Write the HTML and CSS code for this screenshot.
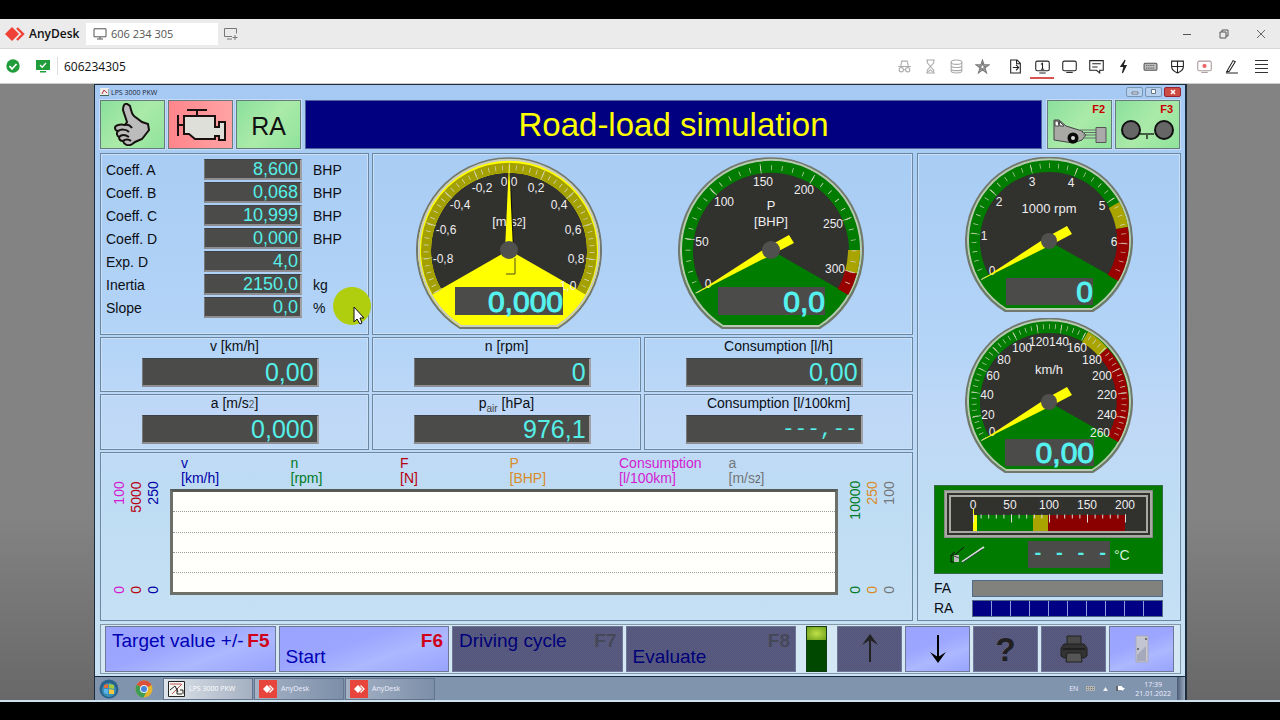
FILE: index.html
```html
<!DOCTYPE html>
<html lang="en">
<head>
<meta charset="utf-8">
<title>AnyDesk - 606 234 305</title>
<link rel="stylesheet" href="styles.css">
</head>
<body>
<header class="tabs">
  <svg class="brand-mark" width="20" height="14" viewBox="0 0 20 14" aria-hidden="true"><path d="M7 0l7 7-7 7-7-7z" fill="#ef4136"/><path d="M12 1l6 6-6 6" fill="none" stroke="#ef4136" stroke-width="2.4"/></svg>
  <span class="brand">AnyDesk</span>
  <button class="tab"><svg width="14" height="12" viewBox="0 0 14 12" fill="none" stroke="#555"><path d="M1 .8h12v8H1zM4 11h6M7 9v2"/></svg>606 234 305</button>
  <button class="plain" aria-label="New session"><svg width="15" height="13" viewBox="0 0 15 13" fill="none" stroke="#777"><path d="M9 9.500H1.500v-8h12v5M4 12h5M12 8v5M9.500 10.500h5"/></svg></button>
  <div class="window-buttons">
    <button class="plain" aria-label="Minimize"><svg width="12" height="12" viewBox="0 0 12 12" stroke="#555"><path d="M2 6.500h8"/></svg></button>
    <button class="plain" aria-label="Restore"><svg width="12" height="12" viewBox="0 0 12 12" stroke="#555" fill="none"><path d="M2 4h6v6H2zM4 4V2h6v6H8"/></svg></button>
    <button class="plain" aria-label="Close"><svg width="12" height="12" viewBox="0 0 12 12" stroke="#666"><path d="M2 2l8 8M10 2l-8 8"/></svg></button>
  </div>
</header>
<nav class="toolbar">
  <svg width="14" height="14" viewBox="0 0 14 14" fill="none" aria-hidden="true"><circle cx="7" cy="7" r="6.700" fill="#209c3a"/><path d="M3.500 7l2.500 3 4.500-5" stroke="#fff" stroke-width="1.800"/></svg>
  <svg class="secure" width="14" height="13" viewBox="0 0 14 13" fill="none" aria-hidden="true"><path d="M0 0h14v10H0zM4 11h6v1.500H4z" fill="#209c3a"/><path d="M4 5l2.200 2.300L10 3" stroke="#fff" stroke-width="1.300"/></svg>
  <input class="address" aria-label="Remote address" value="606234305">
  <div class="tools faint">
    <button class="plain" aria-label="Privacy"><svg width="15" height="15" viewBox="0 0 14 14"><path d="M1 7h12M3.500 6.500L4.500 2h5l1 4.500M6 10h2"/><circle cx="4" cy="10" r="2"/><circle cx="10" cy="10" r="2"/></svg></button>
    <button class="plain" aria-label="Wait"><svg width="15" height="15" viewBox="0 0 14 14"><path d="M3 1h8M3 13h8M4 1v2.500L7 7l3-3.500V1M4 13v-2.500L7 7l3 3.500V13M5 12l2-2 2 2"/></svg></button>
    <button class="plain" aria-label="Storage"><svg width="15" height="15" viewBox="0 0 14 14"><ellipse cx="7" cy="3" rx="5" ry="2"/><path d="M2 3v8c0 2.700 10 2.700 10 0V3M2 6c0 2.500 10 2.500 10 0M2 9c0 2.500 10 2.500 10 0"/></svg></button>
    <button class="plain star" aria-label="Favorite"><svg width="15" height="15" viewBox="0 0 14 14"><path d="M7 1l1.500 4.500H13L9.400 8.200 10.800 13 7 10l-3.800 3 1.400-4.800L1 5.500h4.500z"/><path d="M7 4l.9 2.500h2L8.300 8l.6 2L7 9 5.100 10l.6-2-1.600-1.500h2z"/></svg></button>
  </div>
  <div class="tools">
    <button class="plain" aria-label="Transfer"><svg width="15" height="15" viewBox="0 0 14 14"><path d="M8.500 1H2.500v12h9V4zM8 1v3.500h3.500M4.500 8h5M7.500 5.500L10 8l-2.500 2.500"/></svg></button>
    <button class="plain active" aria-label="Monitor"><svg width="15" height="15" viewBox="0 0 14 14"><rect x=".7" y="2" width="12.600" height="9" rx="1.500"/><path d="M4 13h6M5.500 5L7 4v5.500M5.500 9.500h3"/></svg></button>
    <button class="plain" aria-label="Display"><svg width="15" height="15" viewBox="0 0 14 14"><rect x=".7" y="2" width="12.600" height="9" rx="1.500"/><path d="M4 12.500h6"/></svg></button>
    <button class="plain" aria-label="Chat"><svg width="15" height="15" viewBox="0 0 14 14"><path d="M.7 1.500h12.600v9H10V13L7 10.500H.7zM3 4.500h8M3 7.500h5"/></svg></button>
    <button class="plain" aria-label="Actions"><svg width="15" height="15" viewBox="0 0 14 14"><path d="M8.500 1L4.500 7h3l-1.500 6 3.500-7h-3z" fill="#222"/></svg></button>
    <button class="plain" aria-label="Keyboard"><svg width="15" height="15" viewBox="0 0 14 14"><rect x="1" y="4" width="12" height="6.500" rx="1" fill="#bbb" stroke="#555"/><path d="M3 6h8M3 8.500h8" stroke="#555" stroke-dasharray="1 1"/></svg></button>
    <button class="plain" aria-label="Permissions"><svg width="15" height="15" viewBox="0 0 14 14"><path d="M1.500 2h11v5c0 3-3 5-5.500 6C4.500 12 1.500 10 1.500 7zM7 2v11M1.500 7h11"/></svg></button>
    <button class="plain" aria-label="Record"><svg width="15" height="15" viewBox="0 0 14 14"><rect x=".7" y="2" width="12.600" height="9" rx="1.500" stroke="#a99"/><path d="M4 12.500h6" stroke="#a99"/><circle cx="7" cy="6.500" r="1.500" fill="#e55" stroke="#e77"/></svg></button>
    <button class="plain" aria-label="Draw"><svg width="15" height="15" viewBox="0 0 14 14"><path d="M2.500 12L8.500 1.500l2 1-5.500 9zM2 13h11"/></svg></button>
  </div>
  <button class="plain menu" aria-label="Menu"><svg width="14" height="15" viewBox="0 0 14 15" stroke="#333"><path d="M0 1.500h13M0 5.500h13M0 9.500h13M0 13.500h13"/></svg></button>
</nav>

<main class="stage">
 <div class="desktop">
  <section class="app">
    <div class="caption">
      <svg width="9" height="8" viewBox="0 0 9 8" aria-hidden="true"><path d="M0 0h9v8H0z" fill="#eee"/><path d="M0 7.500h9V1" stroke="#465" fill="none"/><path d="M2 6l2-4 3 3" stroke="#b33" fill="none"/></svg>
      <span>LPS 3000 PKW</span>
      <button class="cap-btn first" aria-label="Minimize window"><svg width="8" height="6"><path d="M1 3h6v2H1z" fill="#fff" stroke="#678"/></svg></button>
      <button class="cap-btn" aria-label="Restore window"><svg width="8" height="6"><path d="M1.500 .5h4v4h-4z" fill="#fff" stroke="#678"/></svg></button>
      <button class="cap-btn close" aria-label="Close window"><svg width="8" height="6"><path d="M2 1l4 4M6 1L2 5" stroke="#fff" stroke-width="1.500"/></svg></button>
    </div>

    <div class="head">
      <button class="tile green" aria-label="Status OK"><svg width="37" height="43" viewBox="0 0 37 43"><path d="M13 1c-3-1-4 3-4 6l4 12-2 3C6 21 1 22 1 25c0 2 2 3 3 3-2 2-1 5 1 6 0 3 2 4 4 4 1 3 4 5 7 4 2 0 3-2 5-3l7-3 7-9-1-6-6-2-8-6C17 10 17 6 16 3z" fill="#bcbcbc" stroke="#16120f" stroke-width="2"/><path d="M4 28c3-2 8-2 11 1M5 34c3-3 7-2 10 0M9 38c2-2 6-2 8 0M11 22c3-1 5 0 7 3" fill="none" stroke="#16120f" stroke-width="2"/></svg></button>
      <button class="tile red" aria-label="Engine"><svg width="50" height="34" viewBox="0 0 50 34" stroke="#1a1010" stroke-width="2"><path d="M11 2h20M21 2v6M2 7v21M2 17h6" fill="none"/><path d="M8 8h31v11h4v-5h6v18h-6v-4h-4v3H19l-6-5H8z" fill="#dfdfd9"/></svg></button>
      <button class="tile green axle">RA</button>
      <h1>Road-load simulation</h1>
      <button class="tile green keyed" aria-label="F2 Car"><b>F2</b><svg width="54" height="26" viewBox="0 0 54 26"><path d="M1 2h5l7 6 16 5 4 4-4 5-9 3-19-3z" fill="#a9aaa6" stroke="#444"/><path d="M2 3h3l1 5H2zM6 3l5 5H7z" fill="#fff" stroke="#444"/><path d="M27 12h17M29 14.500h15M30 17h14M30 20h14" stroke="#66706a"/><path d="M43 9.500h10v15H43z" fill="#aaa" stroke="#555"/><circle cx="20" cy="20" r="5.500" fill="#080808"/><circle cx="20" cy="20" r="2" fill="#ddd"/></svg></button>
      <button class="tile green keyed" aria-label="F3 Axle"><b>F3</b><svg width="54" height="24" viewBox="0 0 54 24"><path d="M19 16h14M26 16v5" stroke="#435e43" stroke-width="2"/><circle cx="10" cy="12" r="9" fill="#666" stroke="#111" stroke-width="2"/><circle cx="43" cy="12" r="9" fill="#666" stroke="#111" stroke-width="2"/></svg></button>
    </div>

    <div class="panels">
      <div class="left">
        <section class="panel coeffs">
          <label for="ca">Coeff. A</label><output id="ca" class="lcd">8,600</output><span>BHP</span>
          <label for="cb">Coeff. B</label><output id="cb" class="lcd">0,068</output><span>BHP</span>
          <label for="cc">Coeff. C</label><output id="cc" class="lcd">10,999</output><span>BHP</span>
          <label for="cd">Coeff. D</label><output id="cd" class="lcd">0,000</output><span>BHP</span>
          <label for="ed">Exp. D</label><output id="ed" class="lcd">4,0</output><span></span>
          <label for="in">Inertia</label><output id="in" class="lcd">2150,0</output><span>kg</span>
          <label for="sl">Slope</label><output id="sl" class="lcd">0,0</output><span>%</span>
          <div class="pointer"><svg width="38" height="38" viewBox="0 0 38 38"><circle cx="19" cy="19" r="19" fill="#b1ce0e"/><path d="M21 20v15l3-3 3 5 2-1-2-5h4z" fill="#fff" stroke="#111"/></svg></div>
        </section>

        <section class="panel dials">
          <svg class="dial" width="186" height="172" viewBox="-93 -93 186 172">
            <path d="M-49 78A92 92 0 1 1 49 78Z" fill="#ff0" stroke="#73786f" stroke-width="2"/>
            <path d="M-48 76A90 90 0 1 1 48 76Z" fill="none" stroke="#c9cdc0" stroke-width="2"/>
            <path d="M0 0L-68 39A78 78 0 1 1 68 39Z" fill="#31312e"/>
            <path d="M-72 42A83 83 0 1 1 72 42" fill="none" stroke="#a3a000" stroke-width="10"/>
            <path class="ticks" d="M-72 42A83 83 0 1 1 72 42" pathLength="240" stroke-width="5" stroke-dasharray=".5 4.300"/>
            <path class="ticks" d="M-71 41A82 82 0 1 1 71 41" pathLength="240" stroke-width="10" stroke-dasharray=".5 23.500"/>
            <g class="scale"><text x="-66" y="13">-0,8</text><text x="-63" y="-16">-0,6</text><text x="-49" y="-41">-0,4</text><text x="-27" y="-58">-0,2</text><text x="0" y="-64">0,0</text><text x="27" y="-58">0,2</text><text x="50" y="-41">0,4</text><text x="64" y="-16">0,6</text><text x="67" y="13">0,8</text><text x="59" y="40">1,0</text></g>
            <text class="unit" x="0" y="-24">[m/s<tspan class="pow">2</tspan>]</text>
            <path d="M6 8v16h-9" fill="none" stroke="#4c4c20"/>
            <path d="M2 0L2-70 5 0z" fill="#111"/><path d="M0-88L4 0h-8z" fill="#ff0"/><circle r="9" fill="#50504e"/>
            <path d="M-54 37H54v28H-54z" fill="#4b4b49"/><text class="read" x="54" y="62">0,000</text>
          </svg>
          <svg class="dial" width="186" height="172" viewBox="-93 -93 186 172">
            <path d="M-49 78A92 92 0 1 1 49 78Z" fill="#007c00" stroke="#73786f" stroke-width="2"/>
            <path d="M-48 76A90 90 0 1 1 48 76Z" fill="none" stroke="#b9c9b2" stroke-width="2"/>
            <path d="M0 0L-68 39A78 78 0 1 1 68 39Z" fill="#31312e"/>
            <path d="M83 0A83 83 0 0 1 80 22" fill="none" stroke="#a9a400" stroke-width="12"/>
            <path d="M80 22A83 83 0 0 1 72 42" fill="none" stroke="#900" stroke-width="12"/>
            <path class="ticks" d="M-72 42A83 83 0 1 1 72 42" pathLength="240" stroke-width="5" stroke-dasharray=".5 7"/>
            <path class="ticks" d="M-71 41A82 82 0 1 1 71 41" pathLength="240" stroke-width="10" stroke-dasharray=".5 37"/>
            <g class="scale"><text x="-63" y="38">0</text><text x="-69" y="-4">50</text><text x="-47" y="-44">100</text><text x="-8" y="-64">150</text><text x="33" y="-56">200</text><text x="62" y="-22">250</text><text x="64" y="23">300</text></g>
            <text class="unit" x="0" y="-40">P</text><text class="unit" x="0" y="-24">[BHP]</text>
            <path class="needle" d="M-76 44L-2-4 18-15 23-7 2 4z"/><circle r="9" fill="#50504e"/>
            <path d="M-53 37H54v28H-53z" fill="#4b4b49"/><text class="read" x="54" y="62">0,0</text>
          </svg>
        </section>

        <section class="panel meter"><label for="v">v [km/h]</label><output id="v" class="lcd">0,00</output></section>
        <section class="panel meter"><label for="n">n [rpm]</label><output id="n" class="lcd">0</output></section>
        <section class="panel meter"><label for="c1">Consumption [l/h]</label><output id="c1" class="lcd">0,00</output></section>
        <section class="panel meter"><label for="a">a [m/s<small>2</small>]</label><output id="a" class="lcd">0,000</output></section>
        <section class="panel meter"><label for="p">p<sub>air</sub> [hPa]</label><output id="p" class="lcd">976,1</output></section>
        <section class="panel meter"><label for="c2">Consumption [l/100km]</label><output id="c2" class="lcd dashes">---,--</output></section>

        <section class="panel chart">
          <div class="axis start"><p class="magenta"><span>100</span><span>0</span></p><p class="crimson"><span>5000</span><span>0</span></p><p class="blue"><span>250</span><span>0</span></p></div>
          <div class="plot">
            <div class="legend"><span class="blue">v<br>[km/h]</span><span class="green-t">n<br>[rpm]</span><span class="crimson">F<br>[N]</span><span class="orange">P<br>[BHP]</span><span class="magenta">Consumption<br>[l/100km]</span><span class="gray">a<br>[m/s<small>2</small>]</span></div>
            <div class="grid-area"><i></i><i></i><i></i><i></i><i></i></div>
          </div>
          <div class="axis end"><p class="green-t"><span>10000</span><span>0</span></p><p class="orange"><span>250</span><span>0</span></p><p class="gray"><span>100</span><span>0</span></p></div>
        </section>
      </div>

      <section class="panel right">
        <svg class="dial" width="168" height="156" viewBox="-84 -84 168 156">
          <path d="M-44 70A83 83 0 1 1 44 70Z" fill="#007c00" stroke="#73786f" stroke-width="2"/>
          <path d="M-43 68A81 81 0 1 1 43 68Z" fill="none" stroke="#b9c9b2" stroke-width="2"/>
          <path d="M0 0L-60 34A69 69 0 1 1 60 34Z" fill="#31312e"/>
          <path d="M65-36A74 74 0 0 1 73-13" fill="none" stroke="#a9a400" stroke-width="12"/>
          <path d="M73-13A74 74 0 0 1 64 37" fill="none" stroke="#900" stroke-width="12"/>
          <path class="ticks" d="M-65 37A75 75 0 1 1 65 37" pathLength="240" stroke-width="5" stroke-dasharray=".5 6.560"/>
          <path class="ticks" d="M-64 37A74 74 0 1 1 64 37" pathLength="240" stroke-width="9" stroke-dasharray=".5 34.800"/>
          <g class="scale"><text x="-57" y="34">0</text><text x="-65" y="-1">1</text><text x="-50" y="-35">2</text><text x="-17" y="-55">3</text><text x="22" y="-54">4</text><text x="53" y="-31">5</text><text x="65" y="5">6</text></g>
          <text class="unit" x="0" y="-28">1000 rpm</text>
          <path class="needle" d="M-68 39L-2-4 18-15 23-7 2 4z"/><circle r="8" fill="#50504e"/>
          <path d="M-43 37H44v27H-43z" fill="#4b4b49"/><text class="read" x="44" y="61">0</text>
        </svg>
        <svg class="dial" width="168" height="156" viewBox="-84 -84 168 156">
          <path d="M-44 70A83 83 0 1 1 44 70Z" fill="#007c00" stroke="#73786f" stroke-width="2"/>
          <path d="M-43 68A81 81 0 1 1 43 68Z" fill="none" stroke="#b9c9b2" stroke-width="2"/>
          <path d="M0 0L-60 34A69 69 0 1 1 60 34Z" fill="#31312e"/>
          <path d="M36-65A74 74 0 0 1 54-50" fill="none" stroke="#a9a400" stroke-width="12"/>
          <path d="M54-50A74 74 0 0 1 64 37" fill="none" stroke="#900" stroke-width="12"/>
          <path class="ticks" d="M-65 37A75 75 0 1 1 65 37" pathLength="240" stroke-width="5" stroke-dasharray=".5 4.115"/>
          <path class="ticks" d="M-64 37A74 74 0 1 1 64 37" pathLength="240" stroke-width="9" stroke-dasharray=".5 17.960"/>
          <g class="scale"><text x="-57" y="34">0</text><text x="-61" y="17">20</text><text x="-62" y="-3">40</text><text x="-56" y="-22">60</text><text x="-45" y="-38">80</text><text x="-27" y="-50">100</text><text x="-10" y="-56">120</text><text x="10" y="-56">140</text><text x="28" y="-50">160</text><text x="43" y="-38">180</text><text x="53" y="-22">200</text><text x="58" y="-3">220</text><text x="58" y="17">240</text><text x="51" y="35">260</text></g>
          <text class="unit" x="0" y="-28">km/h</text>
          <path class="needle" d="M-68 39L-2-4 18-15 23-7 2 4z"/><circle r="8" fill="#50504e"/>
          <path d="M-44 37H45v27H-44z" fill="#4b4b49"/><text class="read" x="45" y="61">0,00</text>
        </svg>
        <div class="thermo">
          <svg class="gauge-bar" viewBox="0 0 195 34">
            <path d="M22 18h60v16H22z" fill="#007c00"/><path d="M82 18h15v16H82z" fill="#a9a400"/><path d="M97 18h77v16H97z" fill="#8a0000"/><path d="M22 12h1v22h-1z M22 18h4v16h-4z" fill="#ff0"/>
            <path d="M22 19.500h153" stroke="#ddd" stroke-width="4" stroke-dasharray="1 6.600"/><path d="M22 21.500h153" stroke="#ddd" stroke-width="8" stroke-dasharray="1 37"/>
            <g class="scale"><text x="22" y="12">0</text><text x="59" y="12">50</text><text x="98" y="12">100</text><text x="136" y="12">150</text><text x="174" y="12">200</text></g>
          </svg>
          <div class="temp"><svg width="36" height="18" viewBox="0 0 36 18" fill="none"><path d="M5 16H2V9h4l9-8M3 8l3-2" stroke="#111"/><path d="M5 9h5v7H5z" fill="#bbb"/><path d="M5 10l5 2" stroke="#444"/><path d="M13 16L35 1" stroke="#ddd" stroke-width="2"/><path d="M13 17L34 3" stroke="#243"/></svg><output class="lcd" aria-label="Oil temperature">- - - -</output><span>°C</span></div>
        </div>
        <div class="load"><span>FA</span><div class="bar idle"></div><span>RA</span><div class="bar"><i></i><i></i><i></i><i></i><i></i><i></i><i></i><i></i><i></i><i></i></div></div>
      </section>
    </div>

    <div class="keys">
      <button class="key"><span>Target value +/-</span><b>F5</b></button>
      <button class="key"><span class="low">Start</span><b>F6</b></button>
      <button class="key off"><span>Driving cycle</span><b>F7</b></button>
      <button class="key off"><span class="low">Evaluate</span><b>F8</b></button>
      <div class="lamp"><i></i></div>
      <button class="key icon off" aria-label="Up"><svg width="18" height="30" viewBox="0 0 18 30"><path d="M9 28V3" stroke="#222" stroke-width="2"/><path d="M9 0l8 11-8-5-8 5z" fill="#222"/></svg></button>
      <button class="key icon" aria-label="Down"><svg width="18" height="30" viewBox="0 0 18 30"><path d="M9 1v25" stroke="#000" stroke-width="2"/><path d="M9 29l8-11-8 5-8-5z" fill="#000"/></svg></button>
      <button class="key icon off help">?</button>
      <button class="key icon off" aria-label="Print"><svg width="28" height="28" viewBox="0 0 28 28" stroke="#202020"><path d="M7 1h14v9H7z" fill="#484848"/><path d="M4 9h20l3 4v8l-3 2H4l-3-2v-8z" fill="#333"/><path d="M3 14h22" stroke-width="2"/><path d="M7 18h14l1 9H6z" fill="#555"/></svg></button>
      <button class="key icon" aria-label="Exit"><svg width="14" height="28" viewBox="0 0 14 28"><path d="M1 1h12v26H1z" fill="#c9cad0" stroke="#aaa7b5"/><path d="M2 3h9v23H2z" fill="#a6a8bc"/><path d="M2 3h9v8L2 20z" fill="#c3c5d2"/><path d="M3 13v2M10 4h2" stroke="#555" stroke-width="1.500"/></svg></button>
    </div>
  </section>

  <footer class="taskbar">
    <button class="plain orb" aria-label="Start menu"><svg width="20" height="20" viewBox="0 0 20 20"><circle cx="10" cy="10" r="9.500" fill="#27618c"/><circle cx="10" cy="11" r="7" fill="#3b8fb5"/><path d="M5 6l4-1v4H5z" fill="#e66a35"/><path d="M10 5l5 1v4l-5-1z" fill="#a4c93a"/><path d="M5 10h4v5l-4-1z" fill="#5db4e8"/><path d="M10 10l5 1v4h-5z" fill="#f4c93b"/></svg></button>
    <button class="plain chrome" aria-label="Chrome"><svg width="18" height="18" viewBox="0 0 18 18"><circle cx="9" cy="9" r="8.500" fill="#e4b52c"/><path d="M9 9L1.600 4.800A8.500 8.500 0 0 1 16.500 5z" fill="#d9503c"/><path d="M9 9L1.600 4.800A8.500 8.500 0 0 0 8.500 17.500L12 11z" fill="#3d9d55"/><circle cx="9" cy="9" r="4" fill="#eee"/><circle cx="9" cy="9" r="3" fill="#4384dd"/></svg></button>
    <button class="task current"><svg width="17" height="16" viewBox="0 0 17 16"><path d="M.5 .5h16v15H.5z" fill="#f4f4f0" stroke="#222"/><path d="M2 3h11M4 13L14 3" stroke="#b55" fill="none"/><path d="M2 9l5-4 3 6M9 7v6h5M12 9h3v4" stroke="#222" fill="none"/></svg>LPS 3000 PKW</button>
    <button class="task"><svg width="18" height="18" viewBox="0 0 18 18"><path d="M0 0h18v18H0z" fill="#e8463c"/><path d="M8 5l4 4-4 4-4-4z" fill="#fff"/><path d="M10.500 5.500L14 9l-3.500 3.500" fill="none" stroke="#fff" stroke-width="1.300"/></svg>AnyDesk</button>
    <button class="task"><svg width="18" height="18" viewBox="0 0 18 18"><path d="M0 0h18v18H0z" fill="#e8463c"/><path d="M8 5l4 4-4 4-4-4z" fill="#fff"/><path d="M10.500 5.500L14 9l-3.500 3.500" fill="none" stroke="#fff" stroke-width="1.300"/></svg>AnyDesk</button>
    <div class="tray"><span>EN</span><svg width="9" height="5" viewBox="0 0 9 5"><path d="M0 0h9v5H0z" fill="#b3b5b3"/><path d="M1 1.500h7M1 3.500h7" stroke="#777" stroke-dasharray="1 1"/></svg><svg width="5" height="4" viewBox="0 0 5 4"><path d="M2.500 0L5 4H0z" fill="#eee"/></svg><svg width="9" height="7" viewBox="0 0 9 7"><path d="M0 1h2v5H0z" fill="#666"/><path d="M2 1h4v4H2zM6 2l3 1.500L6 6z" fill="#fff"/></svg><time>17:39<br>21.01.2022</time><i class="peek"></i></div>
  </footer>
 </div>
</main>
</body>
</html>
```
FILE: styles.css
```css
* { box-sizing: border-box; }
body {
  margin: 0;
  min-height: 100vh;
  display: flex;
  flex-direction: column;
  border-top: 19px solid #000;
  border-bottom: 19px solid #000;
  font-family: "Liberation Sans", Arial, sans-serif;
  font-size: 14px;
  color: #0b0e14;
  background: #777;
}
button { font: inherit; color: inherit; padding: 0; border: 0; }
svg { display: block; flex: none; }
.plain { background: none; display: grid; place-items: center; }

/* AnyDesk chrome */
.tabs, .toolbar { font-family: "Open Sans", "Noto Sans", sans-serif; display: flex; align-items: center; }
.tabs { height: 29px; background: #ebebeb; padding-left: 5px; }
.brand { font-size: 12px; font-weight: 600; color: #111; margin-left: 4px; width: 57px; }
.tab { display: flex; align-items: center; gap: 4px; width: 132px; height: 22px; padding-left: 7px; background: #fff; font-size: 11px; color: #555; }
.tabs > .plain { margin-left: 5px; }
.window-buttons { margin-left: auto; display: flex; gap: 25px; padding-right: 13px; }
.toolbar { height: 36px; background: #fff; border-top: 1px solid #d8d8d8; border-bottom: 1px solid #ccc; padding: 0 11px 0 6px; }
.secure { margin-left: 16px; }
.address { flex: 1; min-width: 80px; height: 18px; margin-left: 7px; padding: 0 0 0 6px; border: 0; border-left: 1px solid #ddd; font: inherit; font-size: 12px; color: #111; outline: 0; }
.tools { display: flex; gap: 3px; }
.tools .plain { width: 24px; height: 26px; border-bottom: 2px solid transparent; padding-top: 2px; }
.tools svg { fill: none; stroke: #222; }
.tools.faint { margin-right: 9px; gap: 2px; }
.faint svg { stroke: #aaa; }
.faint .star svg { stroke: #777; }
.tools .active { border-bottom-color: #d9534f; }
.menu { margin-left: 12px; }

/* Remote desktop */
.stage { flex: 1; display: flex; padding: 0 93px 0 94px; background: linear-gradient(#838383 70%, #686868); border-bottom: 2px solid #cfe3ee; }
.desktop { flex: 1; display: flex; flex-direction: column; border: 1px solid #1d2c3c; border-width: 1px 2px 0 1px; }
.app { flex: 1; display: flex; flex-direction: column; padding: 0 4px 2px 5px; background: linear-gradient(#a5c9f3, #b4d5f7 45%, #c0d8f7 56%, #bedcf3 70%, #c9e2f4); }
.caption { height: 14px; display: flex; align-items: center; gap: 2px; font: 7px "Open Sans", sans-serif; color: #223; }
.cap-btn { display: grid; place-items: center; width: 17px; height: 10px; border: 1px solid #7795b5; border-radius: 2px; background: #b6d0ee; }
.cap-btn.first { margin-left: auto; }
.cap-btn.close { background: #cc4b42; border-color: #923; }

.head { display: flex; gap: 3px; height: 49px; margin: 1px 1px 4px 0; }
.tile { display: flex; align-items: center; justify-content: center; width: 65px; border: 1px solid #667b80; box-shadow: 0 0 0 1px #c6dcf5; color: #111; }
.tile.green { background: linear-gradient(130deg, #8be09c, #abeaa9 50%, #8fe39c); }
.tile.red { background: linear-gradient(90deg, #ff858b, #ffa3a5); }
.axle { font-size: 25px; padding-top: 4px; }
.keyed { flex-direction: column; justify-content: flex-start; }
.keyed b { align-self: flex-end; margin-right: 6px; font-size: 11px; line-height: 17px; color: #c80000; }
.head h1 { flex: 1; margin: 0 2px 0 1px; display: grid; place-items: center; background: #000080; border: 1px solid #51619b; color: #ff0; font-size: 33px; font-weight: 400; line-height: 1; }

.panels { flex: 1; display: grid; grid-template-columns: 813fr 264fr; gap: 4px; }
.left { display: grid; grid-template-columns: repeat(3, 1fr); grid-template-rows: 182fr 56fr 56fr 169fr; gap: 2px 3px; }
.panel { border: 1px solid #6a87a2; box-shadow: inset 0 0 0 1px #cbe0f7; min-width: 0; }
.lcd { background: #4b4b49; color: #55efe8; border: 1px solid #777; border-top-color: #3c4248; border-right: 2px solid #a1a1a4; border-bottom: 2px solid #8e8e92; text-align: right; padding-right: 2px; }

.coeffs { position: relative; display: grid; grid-template-columns: 98px 98px 1fr; grid-auto-rows: 21px; gap: 2px 0; padding: 5px; align-items: center; }
.coeffs .lcd { height: 21px; font-size: 18px; line-height: 19px; }
.coeffs span { padding-left: 11px; }
.pointer { position: absolute; right: -3px; bottom: 9px; }

.dials { grid-column: span 2; display: flex; justify-content: center; align-items: center; gap: 76px; padding: 0 6px 2px 0; }
.ticks { fill: none; stroke: #d5d8c0; }
.scale { font-size: 12px; fill: #eee; text-anchor: middle; }
.unit { font-size: 13px; fill: #eee; text-anchor: middle; }
.pow { font-size: 10px; }
.read { font-size: 30px; fill: #55f2f0; stroke: #55f2f0; text-anchor: end; }
.needle { fill: #ff0; }

.meter { display: flex; flex-direction: column; align-items: center; }
.meter label { line-height: 16px; height: 20px; white-space: nowrap; }
.meter .lcd { width: 66%; height: 29px; margin-right: 8px; font-size: 25px; line-height: 27px; padding-right: 3px; }
.meter .dashes { font-family: "Liberation Mono", monospace; font-size: 21px; }
small { font-size: 10px; color: #555; }
sub { font-size: 10px; line-height: 0; color: #444; }

.chart { grid-column: span 3; display: grid; grid-template-columns: 69px 1fr 74px; padding-bottom: 25px; }
.plot { display: flex; flex-direction: column; }
.legend { display: grid; grid-template-columns: repeat(6, 1fr); padding: 3px 0 2px 11px; line-height: 15px; }
.grid-area { flex: 1; display: flex; flex-direction: column; border: 3px solid #6d7069; border-top-color: #555a55; background: #fffffc; }
.grid-area i { flex: 1; border-bottom: 1px dotted #999; }
.grid-area i:last-child { border: 0; }
.axis { display: flex; gap: 1px; padding: 28px 0 1px; }
.axis.start { justify-content: flex-end; padding-right: 9px; }
.axis.end { padding-left: 9px; }
.axis p { display: flex; justify-content: space-between; margin: 0; writing-mode: vertical-rl; transform: rotate(180deg); flex-direction: row-reverse; line-height: 16px; }
.blue { color: #0000a8; }
.green-t { color: #007b27; }
.crimson { color: #b80010; }
.orange { color: #d98b27; }
.magenta { color: #d21bd2; }
.gray { color: #74777a; }

.right { display: flex; flex-direction: column; align-items: center; padding: 3px 17px 3px 16px; gap: 5px; }
.thermo { width: 100%; margin-top: 6px; padding: 5px 10px 0; background: #007b00; border: 1px solid #356a45; height: 89px; }
.gauge-bar { width: 100%; background: #31312e; border: 6px double #a8aaa2; outline: 1px solid #868a82; }
.temp { display: flex; align-items: center; margin-top: 4px; padding-left: 4px; color: #d9efd9; }
.temp .lcd { width: 82px; height: 27px; margin: 0 4px 0 43px; border: 0; font: bold 18px/26px "Liberation Mono", monospace; padding-right: 2px; white-space: nowrap; }
.load { width: 100%; display: grid; grid-template-columns: 38px 1fr; gap: 2px 0; align-items: center; line-height: 18px; }
.bar { display: flex; gap: 1px; height: 17px; border: 1px solid #526a88; background: #8c9de0; }
.bar i { flex: 1; background: #000084; }
.bar.idle { background: #81827e; }

.keys { display: flex; gap: 3px; height: 50px; margin-top: 3px; padding: 1px 6px 1px 4px; border: 1px solid #8298a8; background: #d3e7f5; }
.key { flex: 1; display: flex; justify-content: space-between; align-items: flex-start; min-width: 0; padding: 2px 5px 0 6px; border: 1px solid #6e7796; font-size: 19px; line-height: 23px; color: #0000b4; background: linear-gradient(160deg, #9aa4ff, #9ca6ff 40%, #acb8ff 65%, #98a3ff); white-space: nowrap; }
.key b { color: #d00018; }
.key .low { padding-top: 16px; }
.key.off { background: repeating-conic-gradient(#505284 0 25%, #5e6079 0 50%) 0 0 / 2px 2px; color: #000078; }
.key.off b { color: #454859; }
.key.icon { flex: 0 0 65px; padding: 0; align-items: center; justify-content: center; }
.key.help { font-size: 33px; font-weight: 700; color: #202020; }
.lamp { width: 21px; margin: 0 7px; background: #004800; border: 1px solid #123c12; }
.lamp i { display: block; height: 13px; background: radial-gradient(#c0e048, #6c9e1c); }

.taskbar { display: flex; align-items: center; height: 24px; border-top: 1px solid #18283c; background: #8094ae; font: 7px "Open Sans", sans-serif; color: #eef; }
.orb { margin-left: 4px; }
.chrome { margin: 0 10px 0 16px; }
.task { display: flex; align-items: center; gap: 4px; width: 90px; height: 22px; margin-right: 1px; padding-left: 4px; border: 1px solid #63758d; background: linear-gradient(90deg, #a5b2c5, #7c8fa9); }
.task.current { background: linear-gradient(90deg, #dde3ea, #a4b0c1); color: #fff; }
.tray { margin-left: auto; display: flex; align-items: center; gap: 8px; height: 100%; }
.tray time { text-align: center; line-height: 9px; margin: 0 -2px 0 2px; }
.peek { width: 8px; height: 100%; background: linear-gradient(90deg, #4a5c78, #9aabbd); }
```
